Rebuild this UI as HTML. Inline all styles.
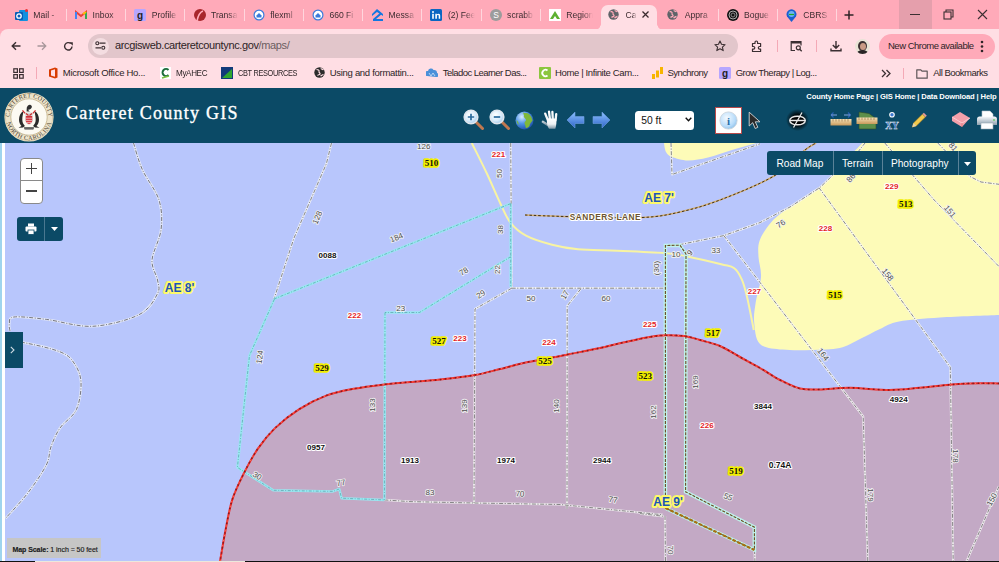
<!DOCTYPE html>
<html><head><meta charset="utf-8">
<style>
*{margin:0;padding:0;box-sizing:border-box}
html,body{width:999px;height:562px;overflow:hidden;background:#b8c6fc;font-family:"Liberation Sans",sans-serif}
.a{position:absolute}
#tabs{position:absolute;left:0;top:0;width:999px;height:40px;background:#ffaab9}
#tool{position:absolute;left:0;top:29px;width:999px;height:59px;background:#ffdee4;border-top-left-radius:8px}
.tt{position:absolute;top:9px;font-size:8.6px;line-height:12px;color:#3d2c30;white-space:nowrap;overflow:hidden;-webkit-mask-image:linear-gradient(90deg,#000 62%,transparent 96%)}
.sep{position:absolute;top:9px;width:1px;height:12px;background:#ffd6dd}
.atab{position:absolute;top:4.5px;width:56px;height:25px;background:#ffdee4;border-radius:7px 7px 0 0}
.atab::before,.atab::after{content:"";position:absolute;bottom:0;width:6px;height:6px}
.atab::before{left:-6px;background:radial-gradient(circle at 0 0,transparent 5.5px,#ffdee4 6px)}
.atab::after{right:-6px;background:radial-gradient(circle at 100% 0,transparent 5.5px,#ffdee4 6px)}
.bk{position:absolute;top:68px;font-size:9.5px;line-height:10px;letter-spacing:-0.4px;color:#2c2426;white-space:nowrap}
#hdr{position:absolute;left:0;top:88px;width:999px;height:55px;background:#0b4a66}
#map{position:absolute;left:0;top:143px;width:999px;height:419px;overflow:hidden;background:#b8c6fc}
.lb{position:absolute;white-space:nowrap;line-height:1}
.pid{font-size:8px;color:#111;text-shadow:0 0 1px #fff,0 0 1px #fff,0 0 2px #fff,0 0 2px #fff}
.b{font-weight:bold;font-size:8.5px}
.rd{font-size:8px;color:#e0262a;text-shadow:0 0 1px #fff,0 0 1px #fff,0 0 2px #fff,0 0 2px #fff}
.yl{font-family:"Liberation Serif",serif;font-weight:bold;font-size:9px;color:#111;background:#f4f000;border-radius:3px;padding:0 1px;box-shadow:0 0 1px 1px #f4f000}
.dm{font-size:8px;color:#5a5a5a;text-shadow:0 0 1px #f4f4f4,0 0 1px #f4f4f4,0 0 2px #eee}
.ae{font-size:12px;font-weight:bold;color:#1b4a94;text-shadow:0 0 1px #fffa80,0 0 1px #fffa80,0 0 2px #fffa80,0 0 2px #fffa80}
.sl{font-size:8.5px;font-weight:bold;color:#6b5430;letter-spacing:0.4px;text-shadow:0 0 1px #fff,0 0 1px #fff,0 0 2px #fff}
</style></head><body>
<div id="tabs"></div>
<div id="tool"></div>
<div class="a" style="left:14.8px;top:9px;line-height:0"><svg width="13" height="13" viewBox="0 0 13 13"><rect x="4" y="1" width="9" height="11" rx="1" fill="#1490df"/><rect x="0" y="3" width="8" height="8" rx="1" fill="#0a5eb5"/><circle cx="4" cy="7" r="2.2" fill="none" stroke="#fff" stroke-width="1.3"/><circle cx="11.5" cy="1.5" r="1.5" fill="#e33"/></svg></div>
<div class="tt" style="left:33.3px;width:28px">Mail -</div>
<div class="sep" style="left:66px"></div>
<div class="a" style="left:75.0px;top:10px;line-height:0"><svg width="12" height="10" viewBox="0 0 12 10"><path d="M1 9V2l5 4 5-4v7" fill="none" stroke="#ea4335" stroke-width="2"/><path d="M1 9V2" stroke="#4285f4" stroke-width="2"/><path d="M11 9V2" stroke="#34a853" stroke-width="2"/><path d="M8 4l3-2" stroke="#fbbc04" stroke-width="2"/></svg></div>
<div class="tt" style="left:92.5px;width:28px">Inbox</div>
<div class="sep" style="left:125px"></div>
<div class="a" style="left:134.2px;top:9px;line-height:0"><svg width="12" height="12" viewBox="0 0 12 12"><rect width="12" height="12" rx="1.5" fill="#b6a6ff"/><text x="6" y="9.5" font-size="10" font-weight="bold" text-anchor="middle" fill="#222" font-family="Liberation Sans">g</text></svg></div>
<div class="tt" style="left:151.7px;width:28px">Profile</div>
<div class="sep" style="left:184px"></div>
<div class="a" style="left:193.5px;top:9px;line-height:0"><svg width="12" height="12" viewBox="0 0 12 12"><circle cx="6" cy="6" r="6" fill="#a8262b"/><path d="M3 12C4 7 6 3 9 2" stroke="#ffaab9" stroke-width="1.5" fill="none"/></svg></div>
<div class="tt" style="left:211.0px;width:28px">Transa</div>
<div class="sep" style="left:244px"></div>
<div class="a" style="left:252.7px;top:9px;line-height:0"><svg width="12" height="13" viewBox="0 0 12 13"><circle cx="6" cy="6" r="5.5" fill="#3b7bdb"/><circle cx="6" cy="6" r="4.3" fill="#fff"/><path d="M3.5 6.5L6 4l2.5 2.5V8.5h-5z" fill="#3b7bdb"/></svg></div>
<div class="tt" style="left:270.2px;width:28px">flexml</div>
<div class="sep" style="left:303px"></div>
<div class="a" style="left:311.9px;top:9px;line-height:0"><svg width="12" height="13" viewBox="0 0 12 13"><circle cx="6" cy="6" r="5.5" fill="#3b7bdb"/><circle cx="6" cy="6" r="4.3" fill="#fff"/><path d="M3.5 6.5L6 4l2.5 2.5V8.5h-5z" fill="#3b7bdb"/></svg></div>
<div class="tt" style="left:329.4px;width:28px">660 Fi</div>
<div class="sep" style="left:362px"></div>
<div class="a" style="left:371.1px;top:9px;line-height:0"><svg width="12" height="12" viewBox="0 0 12 12"><path d="M6 0L12 5v2L6 3 1 7V5z" fill="#1277e1"/><path d="M2 12h10v-2H5l6-5-2-1-7 6z" fill="#1277e1"/></svg></div>
<div class="tt" style="left:388.6px;width:28px">Messa</div>
<div class="sep" style="left:421px"></div>
<div class="a" style="left:430.4px;top:9px;line-height:0"><svg width="12" height="12" viewBox="0 0 12 12"><rect width="12" height="12" rx="1.5" fill="#0a66c2"/><rect x="2.2" y="4.8" width="1.6" height="5" fill="#fff"/><circle cx="3" cy="3" r="1" fill="#fff"/><path d="M5.3 9.8V4.8h1.5v.8c.4-.6 1-.9 1.7-.9 1.2 0 1.7.8 1.7 2.1v3H8.7V7.2c0-.7-.2-1.1-.8-1.1s-1 .4-1 1.1v2.6z" fill="#fff"/></svg></div>
<div class="tt" style="left:447.9px;width:28px">(2) Fee</div>
<div class="sep" style="left:481px"></div>
<div class="a" style="left:489.6px;top:9px;line-height:0"><svg width="12" height="12" viewBox="0 0 12 12"><circle cx="6" cy="6" r="6" fill="#9c9c9c"/><text x="6" y="9" font-size="8.5" text-anchor="middle" fill="#fff" font-family="Liberation Sans">S</text></svg></div>
<div class="tt" style="left:507.1px;width:28px">scrabb</div>
<div class="sep" style="left:540px"></div>
<div class="a" style="left:548.8px;top:9px;line-height:0"><svg width="12" height="12" viewBox="0 0 12 12"><rect width="12" height="12" fill="#fff"/><path d="M1 10L6 2l5 8z" fill="#5cb030"/><path d="M4 10l2-3 2 3z" fill="#fff"/></svg></div>
<div class="tt" style="left:566.3px;width:28px">Region</div>
<div class="atab" style="left:601.1px"></div>
<div class="a" style="left:608.1px;top:9px;line-height:0"><svg width="11" height="11" viewBox="0 0 11 11"><circle cx="5.5" cy="5.5" r="5.2" fill="#5f6368"/><path d="M2.5 2.5c1.5 0 3 .5 2.5 2-.5 1 1.5 1.5 1 2.5-.5 1-2 .5-2.5 1.5M7 1.2c0 1 1.5 1 2.5 1.5M6.5 9c1-.5 2-1.5 3-1.5" stroke="#ffaab9" stroke-width="1.3" fill="none"/></svg></div>
<div class="tt" style="left:625.6px;width:11px">Ca</div>
<svg class="a" style="left:641.1px;top:10px" width="9" height="9" viewBox="0 0 9 9"><path d="M1.5 1.5l6 6M7.5 1.5l-6 6" stroke="#3a2a2e" stroke-width="1.3"/></svg>
<div class="a" style="left:667.3px;top:9px;line-height:0"><svg width="11" height="11" viewBox="0 0 11 11"><circle cx="5.5" cy="5.5" r="5.2" fill="#5f6368"/><path d="M2.5 2.5c1.5 0 3 .5 2.5 2-.5 1 1.5 1.5 1 2.5-.5 1-2 .5-2.5 1.5M7 1.2c0 1 1.5 1 2.5 1.5M6.5 9c1-.5 2-1.5 3-1.5" stroke="#ffaab9" stroke-width="1.3" fill="none"/></svg></div>
<div class="tt" style="left:684.8px;width:28px">Appra</div>
<div class="sep" style="left:718px"></div>
<div class="a" style="left:726.5px;top:9px;line-height:0"><svg width="12" height="12" viewBox="0 0 12 12"><circle cx="6" cy="6" r="6" fill="#111"/><circle cx="6" cy="6" r="4" fill="none" stroke="#aaa" stroke-width="1"/><circle cx="6" cy="6" r="2" fill="none" stroke="#888" stroke-width="1"/></svg></div>
<div class="tt" style="left:744.0px;width:28px">Bogue</div>
<div class="sep" style="left:777px"></div>
<div class="a" style="left:785.8px;top:9px;line-height:0"><svg width="11" height="13" viewBox="0 0 11 13"><path d="M5.5 13L1 7.5A5 5 0 1 1 10 7.5z" fill="#1a5fd0"/><circle cx="5.5" cy="5" r="3" fill="#6ab0f5"/><path d="M3 5.5h5" stroke="#2a2" stroke-width="1.2"/></svg></div>
<div class="tt" style="left:803.3px;width:28px">CBRS I</div>
<svg class="a" style="left:11px;top:41px" width="10" height="10" viewBox="0 0 10 10"><path d="M9.5 5H1.2M5 1.2L1.2 5 5 8.8" fill="none" stroke="#3b2f32" stroke-width="1.4"/></svg>
<svg class="a" style="left:37px;top:41px" width="10" height="10" viewBox="0 0 10 10"><path d="M0.5 5h8.3M5 1.2L8.8 5 5 8.8" fill="none" stroke="#a8979b" stroke-width="1.3"/></svg>
<svg class="a" style="left:63px;top:41px" width="11" height="11" viewBox="0 0 11 11"><path d="M9 5.5A3.7 3.7 0 1 1 7.8 2.6" fill="none" stroke="#3b2f32" stroke-width="1.4"/><path d="M6.3 1.2h3.5v3.5z" fill="#3b2f32"/></svg>
<div class="a" style="left:88px;top:34px;width:650px;height:24px;border-radius:12px;background:#e2c6cb"></div>
<div class="a" style="left:92px;top:38px;width:17px;height:17px;border-radius:50%;background:#f4dde1"></div>
<svg class="a" style="left:95px;top:41px" width="11" height="9" viewBox="0 0 11 9"><circle cx="2.3" cy="2.2" r="1.5" fill="none" stroke="#3b2f32" stroke-width="1.1"/><path d="M4.5 2.2h6M0.5 6.8h5.5" stroke="#3b2f32" stroke-width="1.2"/><circle cx="8.3" cy="6.8" r="1.5" fill="none" stroke="#3b2f32" stroke-width="1.1"/></svg>
<div class="a" style="left:115px;top:39px;font-size:11px;line-height:13px;letter-spacing:-0.37px;color:#2e2326;white-space:nowrap">arcgisweb.carteretcountync.gov<span style="color:#6c5d61">/maps/</span></div>
<svg class="a" style="left:714px;top:40px" width="12" height="12" viewBox="0 0 12 12"><path d="M6 1l1.5 3.3 3.6.4-2.7 2.4.8 3.5L6 8.8 2.8 10.6l.8-3.5L.9 4.7l3.6-.4z" fill="none" stroke="#3b2f32" stroke-width="1.1" stroke-linejoin="round"/></svg>
<svg class="a" style="left:751px;top:40px" width="12" height="12" viewBox="0 0 12 12"><path d="M1.5 3.5h2.5V2.3a1.3 1.3 0 0 1 2.6 0v1.2h3v3h-1a1.3 1.3 0 0 0 0 2.6h1v2.4h-8.1V9.1h1a1.3 1.3 0 0 0 0-2.6h-1z" fill="none" stroke="#3b2f32" stroke-width="1.2" stroke-linejoin="round"/></svg>
<div class="a" style="left:777px;top:40px;width:1px;height:12px;background:#f4a9b6"></div>
<svg class="a" style="left:790px;top:40px" width="13" height="12" viewBox="0 0 13 12"><path d="M5 10.5H1.2V1.5h9.8v4" fill="none" stroke="#3b2f32" stroke-width="1.2"/><path d="M1.2 1.5h9.8v2H1.2z" fill="#3b2f32"/><circle cx="8.3" cy="7.8" r="2" fill="none" stroke="#3b2f32" stroke-width="1.2"/><path d="M9.7 9.2l2 2" stroke="#3b2f32" stroke-width="1.3"/></svg>
<div class="a" style="left:816px;top:40px;width:1px;height:12px;background:#f4a9b6"></div>
<svg class="a" style="left:830px;top:40px" width="12" height="12" viewBox="0 0 12 12"><path d="M6 1v7M2.8 5l3.2 3.2L9.2 5M1 8.5v2.3h10V8.5" fill="none" stroke="#3b2f32" stroke-width="1.4"/></svg>
<div class="a" style="left:855px;top:39px;width:15px;height:15px;border-radius:50%;background:#e9e4d6;overflow:hidden"><div class="a" style="left:3px;top:2px;width:9px;height:10px;border-radius:50%;background:#3a3030"></div><div class="a" style="left:5px;top:4px;width:6px;height:7px;border-radius:50%;background:#c99a84"></div><div class="a" style="left:2px;top:11px;width:11px;height:6px;border-radius:50%;background:#2a2426"></div></div>
<div class="a" style="left:879px;top:33.5px;width:116px;height:25px;border-radius:13px;background:#ffaab9"></div>
<div class="a" style="left:888px;top:40px;font-size:9.5px;line-height:12px;letter-spacing:-0.5px;color:#2e2326;white-space:nowrap">New Chrome available</div>
<svg class="a" style="left:980px;top:40px" width="4" height="13" viewBox="0 0 4 13"><circle cx="2" cy="2" r="1.3" fill="#2e2326"/><circle cx="2" cy="6.5" r="1.3" fill="#2e2326"/><circle cx="2" cy="11" r="1.3" fill="#2e2326"/></svg>
<!-- window controls -->
<div class="a" style="left:899px;top:0;width:33px;height:29px;background:#e59fac"></div>
<div class="a" style="left:910px;top:14px;width:10px;height:1px;background:#3b2f32"></div>
<svg class="a" style="left:943px;top:9px" width="11" height="11" viewBox="0 0 11 11"><rect x="1" y="3" width="7" height="7" fill="none" stroke="#3b2f32" stroke-width="1.1"/><path d="M3 3V1h7v7H8" fill="none" stroke="#3b2f32" stroke-width="1.1"/></svg>
<svg class="a" style="left:977px;top:9px" width="11" height="11" viewBox="0 0 11 11"><path d="M1 1l9 9M10 1l-9 9" stroke="#3b2f32" stroke-width="1.1"/></svg>
<div class="a" style="left:836px;top:9px;width:1px;height:12px;background:#ffd6dd"></div>
<svg class="a" style="left:844px;top:10px" width="10" height="10" viewBox="0 0 10 10"><path d="M5 0.5v9M0.5 5h9" stroke="#2e2326" stroke-width="1.5"/></svg>
<!-- bookmarks -->
<svg class="a" style="left:13px;top:68px" width="11" height="11" viewBox="0 0 11 11"><g fill="none" stroke="#3b2f32" stroke-width="1.2"><rect x="0.8" y="0.8" width="3.6" height="3.6"/><rect x="6.6" y="0.8" width="3.6" height="3.6"/><rect x="0.8" y="6.6" width="3.6" height="3.6"/><rect x="6.6" y="6.6" width="3.6" height="3.6"/></g></svg>
<div class="a" style="left:35.5px;top:67px;width:1px;height:12px;background:#f4a9b6"></div>
<svg class="a" style="left:48px;top:67px" width="10" height="12" viewBox="0 0 10 12"><path d="M1 2.5L7 0.5l2.5 1v9L7 11.5 1 9.5z" fill="#d83b01"/><path d="M3 3.5l4-1.2v7.4L3 8.5z" fill="#ffdee4"/></svg>
<div class="bk" style="left:62.8px;letter-spacing:-0.28px">Microsoft Office Ho...</div>
<svg class="a" style="left:160px;top:67px" width="11" height="12" viewBox="0 0 11 12"><rect width="11" height="12" fill="#fff"/><path d="M8.5 3A3.5 3.5 0 1 0 8.5 8" fill="none" stroke="#1d6e3c" stroke-width="2"/><path d="M2 11l7-2" stroke="#7ac142" stroke-width="1.5"/></svg>
<div class="bk" style="left:175.8px;transform:scaleX(0.85);transform-origin:0 0">MyAHEC</div>
<svg class="a" style="left:221px;top:67px" width="12" height="12" viewBox="0 0 12 12"><rect width="12" height="12" fill="#123a7a"/><path d="M1 11L11 2v9z" fill="#2fa52f"/></svg>
<div class="bk" style="left:237.8px;transform:scaleX(0.774);transform-origin:0 0">CBT RESOURCES</div>
<svg class="a" style="left:314px;top:67px" width="11" height="11" viewBox="0 0 11 11"><circle cx="5.5" cy="5.5" r="5.2" fill="#2b2b2b"/><path d="M2.5 2.5c1.5 0 3 .5 2.5 2-.5 1 1.5 1.5 1 2.5-.5 1-2 .5-2.5 1.5M7 1.2c0 1 1.5 1 2.5 1.5M6.5 9c1-.5 2-1.5 3-1.5" stroke="#ffdee4" stroke-width="1.2" fill="none"/></svg>
<div class="bk" style="left:329.7px;letter-spacing:-0.29px">Using and formattin...</div>
<svg class="a" style="left:426px;top:68px" width="12" height="10" viewBox="0 0 12 10"><path d="M1 8a2.5 2.5 0 0 1 1-5 3 3 0 0 1 5.5-1 2.8 2.8 0 0 1 3.5 3A2 2 0 0 1 10 9z" fill="#4a90d9"/><path d="M3 5l2 3 2-3 2 3" stroke="#cfe3f7" stroke-width="0.8" fill="none"/></svg>
<div class="bk" style="left:442.7px;letter-spacing:-0.54px">Teladoc Learner Das...</div>
<svg class="a" style="left:538.5px;top:67px" width="12" height="12" viewBox="0 0 12 12"><rect width="12" height="12" rx="1" fill="#8cc63f"/><path d="M8.5 3.5A3.2 3.2 0 1 0 8.5 8.5" fill="none" stroke="#fff" stroke-width="1.8"/></svg>
<div class="bk" style="left:555px;letter-spacing:-0.37px">Home | Infinite Cam...</div>
<svg class="a" style="left:652px;top:67px" width="11" height="12" viewBox="0 0 11 12"><rect x="0" y="7" width="3" height="5" fill="#f7b500"/><rect x="4" y="3.5" width="3" height="7" fill="#f7b500"/><rect x="8" y="0" width="3" height="7" fill="#f7b500"/></svg>
<div class="bk" style="left:667.4px;letter-spacing:-0.54px">Synchrony</div>
<svg class="a" style="left:719.4px;top:67px" width="12" height="12" viewBox="0 0 12 12"><rect width="12" height="12" rx="1.5" fill="#b6a6ff"/><text x="6" y="9.5" font-size="10" font-weight="bold" text-anchor="middle" fill="#222" font-family="Liberation Sans">g</text></svg>
<div class="bk" style="left:735.7px;letter-spacing:-0.51px">Grow Therapy | Log...</div>
<svg class="a" style="left:881px;top:69px" width="10" height="9" viewBox="0 0 10 9"><path d="M1 1l3.5 3.5L1 8M5.5 1L9 4.5 5.5 8" fill="none" stroke="#3b2f32" stroke-width="1.3"/></svg>
<div class="a" style="left:903px;top:67.5px;width:1px;height:11px;background:#f4a9b6"></div>
<svg class="a" style="left:915.5px;top:68.5px" width="12" height="10" viewBox="0 0 12 10"><path d="M0.8 0.8h4l1.2 1.4h5.2v7H0.8z" fill="none" stroke="#5f5558" stroke-width="1.2" stroke-linejoin="round"/></svg>
<div class="bk" style="left:933.2px;letter-spacing:-0.49px">All Bookmarks</div>

<div id="hdr"></div>
<svg class="a" style="left:4px;top:92px" width="50" height="50" viewBox="0 0 50 50">
<defs><path id="sealc" d="M8.1 34.75A19.5 19.5 0 1 1 41.9 34.75"/><path id="sealb" d="M2.8 19.05A23 23 0 1 0 47.2 19.05"/></defs>
<circle cx="25" cy="25" r="24.6" fill="#ede4cb"/>
<circle cx="25" cy="25" r="23.6" fill="none" stroke="#cbbb94" stroke-width="0.6"/>
<circle cx="25" cy="25" r="18.2" fill="#fcfaf2" stroke="#b9a77e" stroke-width="0.7"/>
<text font-size="6.2" font-family="Liberation Serif" fill="#4a4030" letter-spacing="0.15"><textPath href="#sealc" startOffset="50%" text-anchor="middle">CARTERET COUNTY</textPath></text>
<text font-size="6.2" font-family="Liberation Serif" fill="#4a4030" letter-spacing="0.45"><textPath href="#sealb" startOffset="50%" text-anchor="middle">NORTH CAROLINA</textPath></text>
<path d="M19.5 19c-3 1.5-4.5 5-4.5 8.5 0 3 1 5 2.5 6.5l-3 1.8 4.6-.3 1.8-1.6c-1.6-1.6-2.6-3.6-2.6-6.4 0-3 .8-5.5 1.2-8.5z" fill="#2a2a2a"/>
<path d="M30.5 19c3 1.5 4.5 5 4.5 8.5 0 3-1 5-2.5 6.5l3 1.8-4.6-.3-1.8-1.6c1.6-1.6 2.6-3.6 2.6-6.4 0-3-.8-5.5-1.2-8.5z" fill="#2a2a2a"/>
<path d="M21.3 20.5h7.4v8c0 2.4-1.7 3.6-3.7 4.3-2-.7-3.7-1.9-3.7-4.3z" fill="#d9d9d9"/>
<path d="M21.8 24h6.4v4.5c0 2-1.4 3-3.2 3.6-1.8-.6-3.2-1.6-3.2-3.6z" fill="#d4303a"/>
<path d="M22 26.2h6M22 28.4h6M22.5 30.4h5" stroke="#f7e2e2" stroke-width="0.7"/>
<path d="M22.8 15.5c.6-2 2.3-3.2 3.8-2.6 1.2.5 1.8 1.8.8 3.2-.8 1.2-2.2 1.8-3.2 1.5.2 1 1 1.6 1.8 2h-3.4c.2-1.4-.1-2.8.2-4.1z" fill="#303030"/>
<path d="M18.5 18.3l2.6 3M31.5 18.3l-2.6 3M22 21.5l2.5 2M28 21.5l-2.5 2" stroke="#cc2a2a" stroke-width="1.2"/>
<path d="M20 35.2h10l-.6 2.2h-8.8z" fill="#3a3a3a"/><path d="M21 36.3h8" stroke="#bbb" stroke-width="0.4"/>
</svg>
<div class="a" style="left:66px;top:102px;font-family:'Liberation Serif',serif;font-size:18px;line-height:22px;letter-spacing:1.25px;color:#fff;-webkit-text-stroke:0.35px #fff;white-space:nowrap">Carteret County GIS</div>
<div class="a" style="left:806.3px;top:92px;font-size:7.6px;line-height:9px;font-weight:bold;letter-spacing:-0.12px;color:#fff;white-space:nowrap">County Home Page | GIS Home | Data Download | Help</div>
<!-- zoom in -->
<svg class="a" style="left:463px;top:109px" width="21" height="21" viewBox="0 0 21 21"><defs><radialGradient id="lens" cx="40%" cy="35%" r="70%"><stop offset="0" stop-color="#ffffff"/><stop offset="0.6" stop-color="#d8ecfc"/><stop offset="1" stop-color="#9cc6ea"/></radialGradient></defs><path d="M13 13l6.5 6.5" stroke="#c07850" stroke-width="3" stroke-linecap="round"/><circle cx="8" cy="8" r="6.8" fill="url(#lens)" stroke="#dfe6ee" stroke-width="1.6"/><path d="M8 4.8v6.4M4.8 8h6.4" stroke="#2a6a9c" stroke-width="1.7"/></svg>
<svg class="a" style="left:489px;top:109px" width="21" height="21" viewBox="0 0 21 21"><path d="M13 13l6.5 6.5" stroke="#c07850" stroke-width="3" stroke-linecap="round"/><circle cx="8" cy="8" r="6.8" fill="url(#lens)" stroke="#dfe6ee" stroke-width="1.6"/><path d="M4.8 8h6.4" stroke="#2a6a9c" stroke-width="1.7"/></svg>
<svg class="a" style="left:515px;top:111px" width="19" height="19" viewBox="0 0 19 19"><defs><radialGradient id="gl" cx="35%" cy="30%" r="75%"><stop offset="0" stop-color="#d8ecff"/><stop offset="0.5" stop-color="#4f93e8"/><stop offset="1" stop-color="#1d4fa8"/></radialGradient></defs><circle cx="9.5" cy="9.5" r="9" fill="url(#gl)"/><path d="M8 1.5c2 1 4 0 6 1.5 2 2 3 4 3.5 6.5-1 2-3 3-3 5.5-1 1.5-3 2.5-4 1.5.5-2-1-3-1-4.5s2-2 1.5-3.5C10 7 8 6 9 4.5z M1.5 9c1.5 1 2.5 3 2 5-1-1-2-3-2-5z" fill="#7fb83a"/></svg>
<svg class="a" style="left:538px;top:106px" width="24" height="26" viewBox="538 106 24 26"><defs><linearGradient id="hg" x1="0" y1="0" x2="0" y2="1"><stop offset="0" stop-color="#ffffff"/><stop offset="0.55" stop-color="#eef2f5"/><stop offset="1" stop-color="#7f97a6"/></linearGradient></defs><g stroke="url(#hg)" stroke-linecap="round" fill="none" stroke-width="2.3"><path d="M545.2 113.6L548 120.5M549 111.6L550 119.5M552.4 112L552.8 119.5M556.2 114.2L555.6 120.5M542.8 121.8L547.8 125"/></g><path d="M547 118.5h9.3c.3 3 .2 6.5-1 10.2h-6.3c-1.5-2-2.5-5-2-10.2z" fill="url(#hg)"/></svg>
<svg class="a" style="left:566px;top:111px" width="19" height="18" viewBox="0 0 19 18"><defs><linearGradient id="ag" x1="0" y1="0" x2="0" y2="1"><stop offset="0" stop-color="#8cc0ff"/><stop offset="1" stop-color="#2e64c8"/></linearGradient></defs><path d="M1 9L9 1v4.5h9v7H9V17z" fill="url(#ag)" stroke="#6f9ee0" stroke-width="0.6"/></svg>
<svg class="a" style="left:592px;top:111px" width="19" height="18" viewBox="0 0 19 18"><path d="M18 9L10 1v4.5H1v7h9V17z" fill="url(#ag)" stroke="#6f9ee0" stroke-width="0.6"/></svg>
<div class="a" style="left:635px;top:110.5px;width:59px;height:19.5px;border-radius:3.5px;background:#fff"></div>
<div class="a" style="left:641.3px;top:114.5px;font-size:10.3px;line-height:12px;color:#111;white-space:nowrap">50 ft</div>
<svg class="a" style="left:684.5px;top:117px" width="7" height="5" viewBox="0 0 7 5"><path d="M0.7 0.8L3.5 3.8 6.3 0.8" fill="none" stroke="#111" stroke-width="1.4"/></svg>
<!-- info -->
<div class="a" style="left:714.8px;top:107px;width:27px;height:27px;background:#fff;border:1px solid #b84a4a"></div>
<svg class="a" style="left:718.5px;top:110.5px" width="19" height="19" viewBox="0 0 19 19"><defs><radialGradient id="ig" cx="40%" cy="35%" r="70%"><stop offset="0" stop-color="#f4faff"/><stop offset="0.7" stop-color="#b8dcfa"/><stop offset="1" stop-color="#8cbfe8"/></radialGradient></defs><circle cx="9.5" cy="9.5" r="8.6" fill="url(#ig)" stroke="#c9d4dc" stroke-width="0.9"/><text x="9.5" y="14" font-size="11" font-family="Liberation Serif" font-weight="bold" text-anchor="middle" fill="#2a6ea8">i</text></svg>
<svg class="a" style="left:748px;top:110.5px" width="15" height="19" viewBox="0 0 15 19"><path d="M1.2 1.2V15l3.5-3.3 2.5 5.8 2.6-1.2-2.5-5.5H12z" fill="#2b2b2b" stroke="#d8d8d8" stroke-width="0.9" stroke-linejoin="round"/></svg>
<svg class="a" style="left:786px;top:109px" width="23" height="22" viewBox="0 0 23 22"><defs><radialGradient id="mg" cx="50%" cy="50%" r="50%"><stop offset="0.5" stop-color="#000" stop-opacity="0.85"/><stop offset="1" stop-color="#000" stop-opacity="0"/></radialGradient></defs><rect width="23" height="22" fill="url(#mg)"/><ellipse cx="11.5" cy="11.5" rx="7.8" ry="4.3" fill="#000" stroke="#e8e8e8" stroke-width="1.4"/><path d="M16 3.5l-8.5 15M3.7 11.5h15.6" stroke="#e8e8e8" stroke-width="1.3"/></svg>
<!-- ruler arrows -->
<svg class="a" style="left:830px;top:111px" width="22" height="15" viewBox="0 0 22 15"><defs><linearGradient id="rg" x1="0" y1="0" x2="0" y2="1"><stop offset="0" stop-color="#f6e2b8"/><stop offset="1" stop-color="#c99a5b"/></linearGradient></defs><path d="M1 4h6M1 4l2.5-2.5M1 4l2.5 2.5M14 4h6.5M20.5 4L18 1.5M20.5 4L18 6.5" stroke="#2a62b8" stroke-width="1.2" fill="none"/><path d="M1 4h6M14 4h6.5" stroke="#fff" stroke-width="0.4"/><rect x="0.5" y="8" width="21" height="6.5" fill="url(#rg)"/><path d="M3 8v2.5M6 8v2.5M9 8v2.5M12 8v2.5M15 8v2.5M18 8v2.5" stroke="#8a6a3a" stroke-width="0.6"/></svg>
<svg class="a" style="left:855.5px;top:110.5px" width="22" height="19" viewBox="0 0 22 19"><path d="M3 1l10 1.5 7 5v10.5H3z" fill="#5d8f4a" stroke="#2f4a28" stroke-width="0.6"/><rect x="0.5" y="6.5" width="21" height="6.5" fill="url(#rg)"/><path d="M3 6.5v2.5M6 6.5v2.5M9 6.5v2.5M12 6.5v2.5M15 6.5v2.5M18 6.5v2.5" stroke="#8a6a3a" stroke-width="0.6"/></svg>
<svg class="a" style="left:883px;top:110.5px" width="19" height="19" viewBox="0 0 19 19"><circle cx="9" cy="3.8" r="2.8" fill="#fff"/><circle cx="9" cy="3.8" r="1.7" fill="#3a78d0"/><text x="9" y="18.3" font-size="9.5" font-weight="bold" text-anchor="middle" font-family="Liberation Serif" fill="#2a62b8" stroke="#fff" stroke-width="0.3">XY</text></svg>
<svg class="a" style="left:910px;top:112px" width="17" height="17" viewBox="0 0 17 17"><path d="M2.2 15.2l1.2-4.2L12.5 2l3 3-9.1 9z" fill="#f2c94c" stroke="#7a6020" stroke-width="0.5"/><path d="M12.5 2l1.3-1.3 3 3L15.5 5z" fill="#e79a9a"/><path d="M2.2 15.2l1.2-4.2 3 3z" fill="#e8d3a8"/></svg>
<svg class="a" style="left:950.5px;top:111px" width="20" height="17" viewBox="0 0 20 17"><path d="M1 6l8-5 10 6-8 9L1 10z" fill="#f3a0aa"/><path d="M1 6l10 6 8-5" fill="none" stroke="#fcd6da" stroke-width="0.8"/><path d="M11 12v4" stroke="#c66" stroke-width="0.6"/></svg>
<svg class="a" style="left:975.5px;top:110px" width="22" height="20" viewBox="0 0 22 20"><defs><linearGradient id="pg" x1="0" y1="0" x2="0" y2="1"><stop offset="0" stop-color="#f8fafc"/><stop offset="1" stop-color="#8ea0ae"/></linearGradient></defs><path d="M6 1h8l3 3v5H6z" fill="#fff" stroke="#b8c4cc" stroke-width="0.6"/><path d="M1 9c0-1.5 1-2.5 2.5-2.5h15C20 6.5 21 7.5 21 9v6H1z" fill="url(#pg)"/><rect x="5" y="13" width="12" height="6" fill="#fff" stroke="#9aa8b2" stroke-width="0.6"/><circle cx="18" cy="10" r="0.9" fill="#6c6"/></svg>

<div id="map">
<svg class="a" style="left:0;top:-143px" width="999" height="562" viewBox="0 0 999 562">
<path d="M664.0 143.0 C664.3 144.5 664.7 149.7 666.0 152.0 C667.3 154.3 668.3 155.6 672.0 157.0 C675.7 158.4 682.0 160.4 688.0 160.5 C694.0 160.6 700.7 159.2 708.0 157.5 C715.3 155.8 723.8 152.4 732.0 150.0 C740.2 147.6 752.8 144.2 757.0 143.0 Z" fill="#fdfbb8"/>
<path d="M862.5 143.0 C859.8 145.8 851.0 154.7 846.0 160.0 C841.0 165.3 837.2 170.2 832.5 175.0 C827.8 179.8 823.4 184.2 818.0 188.5 C812.6 192.8 806.3 196.8 800.0 201.0 C793.7 205.2 785.2 209.9 780.0 214.0 C774.8 218.1 771.9 221.0 768.5 225.6 C765.1 230.2 761.1 236.1 759.4 241.3 C757.7 246.5 758.2 251.1 758.5 257.0 C758.8 262.9 761.5 269.4 761.0 277.0 C760.5 284.6 756.8 295.0 755.7 302.6 C754.6 310.2 753.5 315.6 754.2 322.5 C754.9 329.4 755.2 339.4 760.0 343.9 C764.8 348.4 774.0 348.6 782.7 349.6 C791.4 350.6 802.5 350.3 812.0 350.0 C821.5 349.7 831.7 349.8 839.7 348.0 C847.7 346.2 853.3 342.2 860.0 339.0 C866.7 335.8 873.5 331.9 880.0 329.0 C886.5 326.1 889.0 323.4 899.0 321.5 C909.0 319.6 923.3 318.6 940.0 317.5 C956.7 316.4 989.2 315.4 999.0 315.0 L999 143 Z" fill="#fdfbb8"/>
<path d="M219.5 562.0 C219.6 561.6 219.3 564.9 220.3 559.7 C221.3 554.5 223.4 540.7 225.4 530.7 C227.4 520.7 229.1 509.6 232.2 499.9 C235.3 490.2 239.9 481.2 244.2 472.6 C248.5 464.1 252.8 456.0 257.9 448.6 C263.0 441.2 268.2 434.7 275.0 428.1 C281.8 421.6 290.4 414.7 298.9 409.3 C307.4 403.9 317.1 399.0 326.2 395.6 C335.3 392.2 343.9 390.7 353.6 388.8 C363.3 386.9 375.0 385.5 384.4 384.4 C393.8 383.3 400.7 382.8 410.0 382.0 C419.3 381.2 429.2 380.8 440.0 379.6 C450.8 378.4 465.0 376.8 475.0 375.0 C485.0 373.2 491.2 371.2 500.0 369.0 C508.8 366.8 519.3 363.9 528.0 362.0 C536.7 360.1 545.0 358.9 552.0 357.6 C559.0 356.3 562.0 355.6 570.0 354.0 C578.0 352.4 590.0 350.2 600.0 348.0 C610.0 345.8 620.0 343.1 630.0 341.0 C640.0 338.9 651.0 336.4 660.0 335.6 C669.0 334.8 677.3 335.3 684.0 336.0 C690.7 336.7 694.0 338.3 700.0 340.0 C706.0 341.7 713.3 343.2 720.0 346.0 C726.7 348.8 733.3 353.3 740.0 357.0 C746.7 360.7 753.3 364.2 760.0 368.0 C766.7 371.8 773.3 376.6 780.0 380.0 C786.7 383.4 793.3 386.9 800.0 388.5 C806.7 390.1 811.7 389.5 820.0 389.4 C828.3 389.3 838.2 387.7 849.8 387.8 C861.4 387.9 878.0 390.0 889.6 390.0 C901.2 390.0 909.5 388.7 919.5 387.8 C929.5 386.9 941.1 385.5 949.4 384.8 C957.7 384.1 961.0 383.6 969.3 383.4 C977.6 383.2 994.0 383.4 999.0 383.4 L999 562 Z" fill="#c3a9c5"/>
<path d="M471.8 143.0 C474.3 148.1 482.2 163.6 487.0 173.8 C491.8 184.0 496.7 195.9 500.6 204.0 C504.5 212.1 506.2 217.3 510.4 222.6 C514.6 227.9 519.1 231.9 526.0 235.6 C532.9 239.3 543.3 242.4 552.0 244.7 C560.7 247.0 567.2 248.2 578.0 249.2 C588.8 250.2 602.7 250.1 617.0 250.7 C631.3 251.3 652.3 252.1 664.0 253.0 C675.7 253.9 677.9 254.5 687.4 256.4 C696.9 258.3 713.4 262.2 721.2 264.2 C729.0 266.2 730.8 265.6 734.3 268.2 C737.8 270.8 739.8 274.9 742.0 279.9 C744.2 284.9 745.3 289.6 747.3 298.0 C749.3 306.4 752.7 324.7 753.8 330.0" fill="none" stroke="#f8f4a2" stroke-width="2"/>
<path d="M331.5 143.0 L326.4 163.7 L294.0 238.0 L274.0 299.0" fill="none" stroke="#f8f8f6" stroke-opacity="0.8" stroke-width="2.2" stroke-linejoin="round"/>
<path d="M510.7 143.0 L511.7 288.2" fill="none" stroke="#f8f8f6" stroke-opacity="0.8" stroke-width="2.2" stroke-linejoin="round"/>
<path d="M511.7 288.2 L665.3 288.2" fill="none" stroke="#f8f8f6" stroke-opacity="0.8" stroke-width="2.2" stroke-linejoin="round"/>
<path d="M511.7 288.2 L475.0 309.0 L474.0 503.0" fill="none" stroke="#f8f8f6" stroke-opacity="0.8" stroke-width="2.2" stroke-linejoin="round"/>
<path d="M580.7 289.0 L567.2 305.9 L567.0 509.0" fill="none" stroke="#f8f8f6" stroke-opacity="0.8" stroke-width="2.2" stroke-linejoin="round"/>
<path d="M384.4 499.9 L410.0 501.6 L474.0 503.0 L560.0 504.5 L663.0 514.8" fill="none" stroke="#f8f8f6" stroke-opacity="0.8" stroke-width="2.2" stroke-linejoin="round"/>
<path d="M640.0 513.6 L663.6 516.3" fill="none" stroke="#f8f8f6" stroke-opacity="0.8" stroke-width="2.2" stroke-linejoin="round"/>
<path d="M665.0 516.0 L665.5 562.0" fill="none" stroke="#f8f8f6" stroke-opacity="0.8" stroke-width="2.2" stroke-linejoin="round"/>
<path d="M671.0 143.0 L672.0 174.5 L760.0 143.8" fill="none" stroke="#f8f8f6" stroke-opacity="0.8" stroke-width="2.2" stroke-linejoin="round"/>
<path d="M679.6 244.7 L723.8 235.6 L760.0 222.6 L790.0 207.0 L820.0 187.5 L833.0 175.0 L857.5 152.5 L865.0 143.0" fill="none" stroke="#f8f8f6" stroke-opacity="0.8" stroke-width="2.2" stroke-linejoin="round"/>
<path d="M723.8 235.6 L760.0 282.5 L863.2 416.5 L867.8 562.0" fill="none" stroke="#f8f8f6" stroke-opacity="0.8" stroke-width="2.2" stroke-linejoin="round"/>
<path d="M819.0 187.7 L950.3 367.2 L953.2 562.0" fill="none" stroke="#f8f8f6" stroke-opacity="0.8" stroke-width="2.2" stroke-linejoin="round"/>
<path d="M884.8 143.0 L912.8 175.3 L934.2 200.0 L999.0 266.5" fill="none" stroke="#f8f8f6" stroke-opacity="0.8" stroke-width="2.2" stroke-linejoin="round"/>
<path d="M937.8 143.0 L970.0 176.5 L981.0 182.0 L999.0 184.3" fill="none" stroke="#f8f8f6" stroke-opacity="0.8" stroke-width="2.2" stroke-linejoin="round"/>
<path d="M999.0 486.3 L966.3 562.0" fill="none" stroke="#f8f8f6" stroke-opacity="0.8" stroke-width="2.2" stroke-linejoin="round"/>
<path d="M686.5 254.0 L690.0 250.0" fill="none" stroke="#f8f8f6" stroke-opacity="0.8" stroke-width="2.2" stroke-linejoin="round"/>
<path d="M754.5 550.0 L755.0 562.0" fill="none" stroke="#f8f8f6" stroke-opacity="0.8" stroke-width="2.2" stroke-linejoin="round"/>
<path d="M331.5 143.0 L326.4 163.7 L294.0 238.0 L274.0 299.0" fill="none" stroke="#6c6c6c" stroke-width="0.8" stroke-dasharray="4 1.5 1.2 1.5" stroke-linejoin="round"/>
<path d="M510.7 143.0 L511.7 288.2" fill="none" stroke="#6c6c6c" stroke-width="0.8" stroke-dasharray="4 1.5 1.2 1.5" stroke-linejoin="round"/>
<path d="M511.7 288.2 L665.3 288.2" fill="none" stroke="#6c6c6c" stroke-width="0.8" stroke-dasharray="4 1.5 1.2 1.5" stroke-linejoin="round"/>
<path d="M511.7 288.2 L475.0 309.0 L474.0 503.0" fill="none" stroke="#6c6c6c" stroke-width="0.8" stroke-dasharray="4 1.5 1.2 1.5" stroke-linejoin="round"/>
<path d="M580.7 289.0 L567.2 305.9 L567.0 509.0" fill="none" stroke="#6c6c6c" stroke-width="0.8" stroke-dasharray="4 1.5 1.2 1.5" stroke-linejoin="round"/>
<path d="M384.4 499.9 L410.0 501.6 L474.0 503.0 L560.0 504.5 L663.0 514.8" fill="none" stroke="#6c6c6c" stroke-width="0.8" stroke-dasharray="4 1.5 1.2 1.5" stroke-linejoin="round"/>
<path d="M640.0 513.6 L663.6 516.3" fill="none" stroke="#6c6c6c" stroke-width="0.8" stroke-dasharray="4 1.5 1.2 1.5" stroke-linejoin="round"/>
<path d="M665.0 516.0 L665.5 562.0" fill="none" stroke="#6c6c6c" stroke-width="0.8" stroke-dasharray="4 1.5 1.2 1.5" stroke-linejoin="round"/>
<path d="M671.0 143.0 L672.0 174.5 L760.0 143.8" fill="none" stroke="#6c6c6c" stroke-width="0.8" stroke-dasharray="4 1.5 1.2 1.5" stroke-linejoin="round"/>
<path d="M679.6 244.7 L723.8 235.6 L760.0 222.6 L790.0 207.0 L820.0 187.5 L833.0 175.0 L857.5 152.5 L865.0 143.0" fill="none" stroke="#6c6c6c" stroke-width="0.8" stroke-dasharray="4 1.5 1.2 1.5" stroke-linejoin="round"/>
<path d="M723.8 235.6 L760.0 282.5 L863.2 416.5 L867.8 562.0" fill="none" stroke="#6c6c6c" stroke-width="0.8" stroke-dasharray="4 1.5 1.2 1.5" stroke-linejoin="round"/>
<path d="M819.0 187.7 L950.3 367.2 L953.2 562.0" fill="none" stroke="#6c6c6c" stroke-width="0.8" stroke-dasharray="4 1.5 1.2 1.5" stroke-linejoin="round"/>
<path d="M884.8 143.0 L912.8 175.3 L934.2 200.0 L999.0 266.5" fill="none" stroke="#6c6c6c" stroke-width="0.8" stroke-dasharray="4 1.5 1.2 1.5" stroke-linejoin="round"/>
<path d="M937.8 143.0 L970.0 176.5 L981.0 182.0 L999.0 184.3" fill="none" stroke="#6c6c6c" stroke-width="0.8" stroke-dasharray="4 1.5 1.2 1.5" stroke-linejoin="round"/>
<path d="M999.0 486.3 L966.3 562.0" fill="none" stroke="#6c6c6c" stroke-width="0.8" stroke-dasharray="4 1.5 1.2 1.5" stroke-linejoin="round"/>
<path d="M686.5 254.0 L690.0 250.0" fill="none" stroke="#6c6c6c" stroke-width="0.8" stroke-dasharray="4 1.5 1.2 1.5" stroke-linejoin="round"/>
<path d="M754.5 550.0 L755.0 562.0" fill="none" stroke="#6c6c6c" stroke-width="0.8" stroke-dasharray="4 1.5 1.2 1.5" stroke-linejoin="round"/>
<path d="M274.0 299.0 L510.7 203.6" fill="none" stroke="#9ae8f2" stroke-width="2.5" stroke-linejoin="round"/>
<path d="M510.7 203.6 L510.7 287.0" fill="none" stroke="#9ae8f2" stroke-width="2.5" stroke-linejoin="round"/>
<path d="M274.3 299.3 L249.5 355.5 L237.4 467.4 L273.2 490.3 L333.0 491.4 L339.2 489.0 L341.6 498.2 L384.4 499.9" fill="none" stroke="#9ae8f2" stroke-width="2.5" stroke-linejoin="round"/>
<path d="M385.0 312.5 L384.4 499.9" fill="none" stroke="#9ae8f2" stroke-width="2.5" stroke-linejoin="round"/>
<path d="M510.7 256.7 L419.4 312.5 L385.0 312.5" fill="none" stroke="#9ae8f2" stroke-width="2.5" stroke-linejoin="round"/>
<path d="M274.0 299.0 L510.7 203.6" fill="none" stroke="#3f7f88" stroke-opacity="0.7" stroke-width="0.7" stroke-dasharray="3 1.5 1 1.5" stroke-linejoin="round"/>
<path d="M510.7 203.6 L510.7 287.0" fill="none" stroke="#3f7f88" stroke-opacity="0.7" stroke-width="0.7" stroke-dasharray="3 1.5 1 1.5" stroke-linejoin="round"/>
<path d="M274.3 299.3 L249.5 355.5 L237.4 467.4 L273.2 490.3 L333.0 491.4 L339.2 489.0 L341.6 498.2 L384.4 499.9" fill="none" stroke="#3f7f88" stroke-opacity="0.7" stroke-width="0.7" stroke-dasharray="3 1.5 1 1.5" stroke-linejoin="round"/>
<path d="M385.0 312.5 L384.4 499.9" fill="none" stroke="#3f7f88" stroke-opacity="0.7" stroke-width="0.7" stroke-dasharray="3 1.5 1 1.5" stroke-linejoin="round"/>
<path d="M510.7 256.7 L419.4 312.5 L385.0 312.5" fill="none" stroke="#3f7f88" stroke-opacity="0.7" stroke-width="0.7" stroke-dasharray="3 1.5 1 1.5" stroke-linejoin="round"/>
<path d="M665.4 508.1 L665.4 245.5 L680.0 245.2 L686.0 254.0 L685.6 491.8 L754.4 527.2 L754.4 549.9 L665.4 508.1" fill="none" stroke="#bff3ec" stroke-width="3.6" stroke-linejoin="miter"/>
<path d="M665.4 508.1 L665.4 245.5 L680.0 245.2 L686.0 254.0 L685.6 491.8 L754.4 527.2 L754.4 549.9 L665.4 508.1" fill="none" stroke="#6a4a20" stroke-width="1.1" stroke-dasharray="3 1.2" stroke-linejoin="miter"/>
<path d="M665.4 508.1 L754.4 549.9" fill="none" stroke="#a87010" stroke-width="2.2" stroke-dasharray="3.5 1.8"/>
<path d="M133.5 143.0 C135.0 147.5 138.2 160.5 142.5 170.0 C146.8 179.5 155.9 190.0 159.0 200.0 C162.1 210.0 162.2 220.0 161.0 230.0 C159.8 240.0 152.6 251.7 152.0 260.0 C151.4 268.3 156.6 274.4 157.5 280.0 C158.4 285.6 160.5 288.1 157.4 293.9 C154.3 299.7 149.8 309.3 139.0 314.7 C128.2 320.1 108.0 325.5 92.6 326.3 C77.1 327.1 59.4 320.9 46.3 319.4 C33.2 317.8 20.1 316.2 13.9 317.0 C7.7 317.8 10.0 321.7 9.3 324.0 C8.7 326.3 9.9 329.8 10.0 331.0" fill="none" stroke="#eef0f8" stroke-opacity="0.8" stroke-width="2.4"/>
<path d="M133.5 143.0 C135.0 147.5 138.2 160.5 142.5 170.0 C146.8 179.5 155.9 190.0 159.0 200.0 C162.1 210.0 162.2 220.0 161.0 230.0 C159.8 240.0 152.6 251.7 152.0 260.0 C151.4 268.3 156.6 274.4 157.5 280.0 C158.4 285.6 160.5 288.1 157.4 293.9 C154.3 299.7 149.8 309.3 139.0 314.7 C128.2 320.1 108.0 325.5 92.6 326.3 C77.1 327.1 59.4 320.9 46.3 319.4 C33.2 317.8 20.1 316.2 13.9 317.0 C7.7 317.8 10.0 321.7 9.3 324.0 C8.7 326.3 9.9 329.8 10.0 331.0" fill="none" stroke="#6a6a70" stroke-width="0.9" stroke-dasharray="4 1.5 1 1.5"/>
<path d="M5.0 342.0 C8.0 342.1 13.8 340.9 23.0 342.5 C32.2 344.1 51.5 348.4 60.0 351.8 C68.5 355.2 70.5 358.0 74.0 363.0 C77.5 368.0 80.6 374.1 81.0 381.9 C81.4 389.7 79.9 401.9 76.4 409.6 C72.9 417.3 64.2 421.8 60.0 428.0 C55.8 434.2 53.3 440.5 51.0 446.7 C48.7 452.9 50.2 457.3 46.3 465.0 C42.4 472.7 34.6 484.1 27.8 493.0 C21.0 501.9 9.2 514.2 5.5 518.4" fill="none" stroke="#eef0f8" stroke-opacity="0.8" stroke-width="2.4"/>
<path d="M5.0 342.0 C8.0 342.1 13.8 340.9 23.0 342.5 C32.2 344.1 51.5 348.4 60.0 351.8 C68.5 355.2 70.5 358.0 74.0 363.0 C77.5 368.0 80.6 374.1 81.0 381.9 C81.4 389.7 79.9 401.9 76.4 409.6 C72.9 417.3 64.2 421.8 60.0 428.0 C55.8 434.2 53.3 440.5 51.0 446.7 C48.7 452.9 50.2 457.3 46.3 465.0 C42.4 472.7 34.6 484.1 27.8 493.0 C21.0 501.9 9.2 514.2 5.5 518.4" fill="none" stroke="#6a6a70" stroke-width="0.9" stroke-dasharray="4 1.5 1 1.5"/>
<path d="M525.0 215.0 C532.5 215.3 550.5 216.2 570.0 216.6 C589.5 217.0 623.7 218.3 642.0 217.5 C660.3 216.7 667.0 214.9 680.0 212.0 C693.0 209.1 704.3 206.0 720.0 200.0 C735.7 194.0 759.8 184.3 774.0 176.0 C788.2 167.7 798.0 155.5 805.0 150.0 C812.0 144.5 814.2 144.2 816.0 143.0" fill="none" stroke="#d8b070" stroke-width="1.6"/>
<path d="M525.0 215.0 C532.5 215.3 550.5 216.2 570.0 216.6 C589.5 217.0 623.7 218.3 642.0 217.5 C660.3 216.7 667.0 214.9 680.0 212.0 C693.0 209.1 704.3 206.0 720.0 200.0 C735.7 194.0 759.8 184.3 774.0 176.0 C788.2 167.7 798.0 155.5 805.0 150.0 C812.0 144.5 814.2 144.2 816.0 143.0" fill="none" stroke="#2a2010" stroke-width="0.9" stroke-dasharray="2.5 2"/>
<path d="M219.5 562.0 C219.6 561.6 219.3 564.9 220.3 559.7 C221.3 554.5 223.4 540.7 225.4 530.7 C227.4 520.7 229.1 509.6 232.2 499.9 C235.3 490.2 239.9 481.2 244.2 472.6 C248.5 464.1 252.8 456.0 257.9 448.6 C263.0 441.2 268.2 434.7 275.0 428.1 C281.8 421.6 290.4 414.7 298.9 409.3 C307.4 403.9 317.1 399.0 326.2 395.6 C335.3 392.2 343.9 390.7 353.6 388.8 C363.3 386.9 375.0 385.5 384.4 384.4 C393.8 383.3 400.7 382.8 410.0 382.0 C419.3 381.2 429.2 380.8 440.0 379.6 C450.8 378.4 465.0 376.8 475.0 375.0 C485.0 373.2 491.2 371.2 500.0 369.0 C508.8 366.8 519.3 363.9 528.0 362.0 C536.7 360.1 545.0 358.9 552.0 357.6 C559.0 356.3 562.0 355.6 570.0 354.0 C578.0 352.4 590.0 350.2 600.0 348.0 C610.0 345.8 620.0 343.1 630.0 341.0 C640.0 338.9 651.0 336.4 660.0 335.6 C669.0 334.8 677.3 335.3 684.0 336.0 C690.7 336.7 694.0 338.3 700.0 340.0 C706.0 341.7 713.3 343.2 720.0 346.0 C726.7 348.8 733.3 353.3 740.0 357.0 C746.7 360.7 753.3 364.2 760.0 368.0 C766.7 371.8 773.3 376.6 780.0 380.0 C786.7 383.4 793.3 386.9 800.0 388.5 C806.7 390.1 811.7 389.5 820.0 389.4 C828.3 389.3 838.2 387.7 849.8 387.8 C861.4 387.9 878.0 390.0 889.6 390.0 C901.2 390.0 909.5 388.7 919.5 387.8 C929.5 386.9 941.1 385.5 949.4 384.8 C957.7 384.1 961.0 383.6 969.3 383.4 C977.6 383.2 994.0 383.4 999.0 383.4" fill="none" stroke="#ee2626" stroke-width="2"/>
<path d="M219.5 562.0 C219.6 561.6 219.3 564.9 220.3 559.7 C221.3 554.5 223.4 540.7 225.4 530.7 C227.4 520.7 229.1 509.6 232.2 499.9 C235.3 490.2 239.9 481.2 244.2 472.6 C248.5 464.1 252.8 456.0 257.9 448.6 C263.0 441.2 268.2 434.7 275.0 428.1 C281.8 421.6 290.4 414.7 298.9 409.3 C307.4 403.9 317.1 399.0 326.2 395.6 C335.3 392.2 343.9 390.7 353.6 388.8 C363.3 386.9 375.0 385.5 384.4 384.4 C393.8 383.3 400.7 382.8 410.0 382.0 C419.3 381.2 429.2 380.8 440.0 379.6 C450.8 378.4 465.0 376.8 475.0 375.0 C485.0 373.2 491.2 371.2 500.0 369.0 C508.8 366.8 519.3 363.9 528.0 362.0 C536.7 360.1 545.0 358.9 552.0 357.6 C559.0 356.3 562.0 355.6 570.0 354.0 C578.0 352.4 590.0 350.2 600.0 348.0 C610.0 345.8 620.0 343.1 630.0 341.0 C640.0 338.9 651.0 336.4 660.0 335.6 C669.0 334.8 677.3 335.3 684.0 336.0 C690.7 336.7 694.0 338.3 700.0 340.0 C706.0 341.7 713.3 343.2 720.0 346.0 C726.7 348.8 733.3 353.3 740.0 357.0 C746.7 360.7 753.3 364.2 760.0 368.0 C766.7 371.8 773.3 376.6 780.0 380.0 C786.7 383.4 793.3 386.9 800.0 388.5 C806.7 390.1 811.7 389.5 820.0 389.4 C828.3 389.3 838.2 387.7 849.8 387.8 C861.4 387.9 878.0 390.0 889.6 390.0 C901.2 390.0 909.5 388.7 919.5 387.8 C929.5 386.9 941.1 385.5 949.4 384.8 C957.7 384.1 961.0 383.6 969.3 383.4 C977.6 383.2 994.0 383.4 999.0 383.4" fill="none" stroke="#2a1515" stroke-opacity="0.55" stroke-width="1.6" stroke-dasharray="1.4 3.6"/>
<path d="M219.5 562.0 C219.6 561.6 219.3 564.9 220.3 559.7 C221.3 554.5 223.4 540.7 225.4 530.7 C227.4 520.7 229.1 509.6 232.2 499.9 C235.3 490.2 239.9 481.2 244.2 472.6 C248.5 464.1 252.8 456.0 257.9 448.6 C263.0 441.2 268.2 434.7 275.0 428.1 C281.8 421.6 290.4 414.7 298.9 409.3 C307.4 403.9 317.1 399.0 326.2 395.6 C335.3 392.2 343.9 390.7 353.6 388.8 C363.3 386.9 375.0 385.5 384.4 384.4 C393.8 383.3 400.7 382.8 410.0 382.0 C419.3 381.2 429.2 380.8 440.0 379.6 C450.8 378.4 465.0 376.8 475.0 375.0 C485.0 373.2 491.2 371.2 500.0 369.0 C508.8 366.8 519.3 363.9 528.0 362.0 C536.7 360.1 545.0 358.9 552.0 357.6 C559.0 356.3 562.0 355.6 570.0 354.0 C578.0 352.4 590.0 350.2 600.0 348.0 C610.0 345.8 620.0 343.1 630.0 341.0 C640.0 338.9 651.0 336.4 660.0 335.6 C669.0 334.8 677.3 335.3 684.0 336.0 C690.7 336.7 694.0 338.3 700.0 340.0 C706.0 341.7 713.3 343.2 720.0 346.0 C726.7 348.8 733.3 353.3 740.0 357.0 C746.7 360.7 753.3 364.2 760.0 368.0 C766.7 371.8 773.3 376.6 780.0 380.0 C786.7 383.4 793.3 386.9 800.0 388.5 C806.7 390.1 811.7 389.5 820.0 389.4 C828.3 389.3 838.2 387.7 849.8 387.8 C861.4 387.9 878.0 390.0 889.6 390.0 C901.2 390.0 909.5 388.7 919.5 387.8 C929.5 386.9 941.1 385.5 949.4 384.8 C957.7 384.1 961.0 383.6 969.3 383.4 C977.6 383.2 994.0 383.4 999.0 383.4" fill="none" stroke="#f0e0a0" stroke-opacity="0.6" stroke-width="1" stroke-dasharray="0.8 4.2" stroke-dashoffset="2.4"/>
</svg>
<svg class="a" style="left:0;top:-143px" width="999" height="562" viewBox="0 0 999 562" font-family="Liberation Sans"><text x="327.5" y="255" text-anchor="middle" dominant-baseline="central" paint-order="stroke" stroke-linejoin="round" font-size="8" font-weight="bold" fill="#111" stroke="#fff" stroke-width="2.2">0088</text>
<text x="316" y="447" text-anchor="middle" dominant-baseline="central" paint-order="stroke" stroke-linejoin="round" font-size="8" font-weight="bold" fill="#111" stroke="#fff" stroke-width="2.2">0957</text>
<text x="410" y="460" text-anchor="middle" dominant-baseline="central" paint-order="stroke" stroke-linejoin="round" font-size="8" font-weight="bold" fill="#111" stroke="#fff" stroke-width="2.2">1913</text>
<text x="506" y="460" text-anchor="middle" dominant-baseline="central" paint-order="stroke" stroke-linejoin="round" font-size="8" font-weight="bold" fill="#111" stroke="#fff" stroke-width="2.2">1974</text>
<text x="602" y="460" text-anchor="middle" dominant-baseline="central" paint-order="stroke" stroke-linejoin="round" font-size="8" font-weight="bold" fill="#111" stroke="#fff" stroke-width="2.2">2944</text>
<text x="763" y="406" text-anchor="middle" dominant-baseline="central" paint-order="stroke" stroke-linejoin="round" font-size="8" font-weight="bold" fill="#111" stroke="#fff" stroke-width="2.2">3844</text>
<text x="898.7" y="399.3" text-anchor="middle" dominant-baseline="central" paint-order="stroke" stroke-linejoin="round" font-size="8" font-weight="bold" fill="#111" stroke="#fff" stroke-width="2.2">4924</text>
<text x="780" y="465" text-anchor="middle" dominant-baseline="central" paint-order="stroke" stroke-linejoin="round" font-size="8.5" font-weight="bold" fill="#111" stroke="#fff" stroke-width="2.2">0.74A</text>
<text x="498.5" y="154" text-anchor="middle" dominant-baseline="central" paint-order="stroke" stroke-linejoin="round" font-size="8" font-weight="bold" fill="#e41e26" stroke="#fff" stroke-width="2.2">221</text>
<text x="354.5" y="315.5" text-anchor="middle" dominant-baseline="central" paint-order="stroke" stroke-linejoin="round" font-size="8" font-weight="bold" fill="#e41e26" stroke="#fff" stroke-width="2.2">222</text>
<text x="460" y="338" text-anchor="middle" dominant-baseline="central" paint-order="stroke" stroke-linejoin="round" font-size="8" font-weight="bold" fill="#e41e26" stroke="#fff" stroke-width="2.2">223</text>
<text x="549" y="342" text-anchor="middle" dominant-baseline="central" paint-order="stroke" stroke-linejoin="round" font-size="8" font-weight="bold" fill="#e41e26" stroke="#fff" stroke-width="2.2">224</text>
<text x="649.8" y="324.4" text-anchor="middle" dominant-baseline="central" paint-order="stroke" stroke-linejoin="round" font-size="8" font-weight="bold" fill="#e41e26" stroke="#fff" stroke-width="2.2">225</text>
<text x="707" y="425.6" text-anchor="middle" dominant-baseline="central" paint-order="stroke" stroke-linejoin="round" font-size="8" font-weight="bold" fill="#e41e26" stroke="#fff" stroke-width="2.2">226</text>
<text x="754.4" y="291.6" text-anchor="middle" dominant-baseline="central" paint-order="stroke" stroke-linejoin="round" font-size="8" font-weight="bold" fill="#e41e26" stroke="#fff" stroke-width="2.2">227</text>
<text x="825.5" y="228.8" text-anchor="middle" dominant-baseline="central" paint-order="stroke" stroke-linejoin="round" font-size="8" font-weight="bold" fill="#e41e26" stroke="#fff" stroke-width="2.2">228</text>
<text x="891.7" y="186.9" text-anchor="middle" dominant-baseline="central" paint-order="stroke" stroke-linejoin="round" font-size="8" font-weight="bold" fill="#e41e26" stroke="#fff" stroke-width="2.2">229</text>
<text x="431.5" y="163" text-anchor="middle" dominant-baseline="central" paint-order="stroke" stroke-linejoin="round" font-size="9" font-weight="bold" font-family="Liberation Serif" fill="#111" stroke="#f2ee00" stroke-width="3.6">510</text>
<text x="905.7" y="203.6" text-anchor="middle" dominant-baseline="central" paint-order="stroke" stroke-linejoin="round" font-size="9" font-weight="bold" font-family="Liberation Serif" fill="#111" stroke="#f2ee00" stroke-width="3.6">513</text>
<text x="835" y="295.4" text-anchor="middle" dominant-baseline="central" paint-order="stroke" stroke-linejoin="round" font-size="9" font-weight="bold" font-family="Liberation Serif" fill="#111" stroke="#f2ee00" stroke-width="3.6">515</text>
<text x="712.9" y="333" text-anchor="middle" dominant-baseline="central" paint-order="stroke" stroke-linejoin="round" font-size="9" font-weight="bold" font-family="Liberation Serif" fill="#111" stroke="#f2ee00" stroke-width="3.6">517</text>
<text x="736" y="471.3" text-anchor="middle" dominant-baseline="central" paint-order="stroke" stroke-linejoin="round" font-size="9" font-weight="bold" font-family="Liberation Serif" fill="#111" stroke="#f2ee00" stroke-width="3.6">519</text>
<text x="645.3" y="376" text-anchor="middle" dominant-baseline="central" paint-order="stroke" stroke-linejoin="round" font-size="9" font-weight="bold" font-family="Liberation Serif" fill="#111" stroke="#f2ee00" stroke-width="3.6">523</text>
<text x="545" y="361.4" text-anchor="middle" dominant-baseline="central" paint-order="stroke" stroke-linejoin="round" font-size="9" font-weight="bold" font-family="Liberation Serif" fill="#111" stroke="#f2ee00" stroke-width="3.6">525</text>
<text x="439" y="341" text-anchor="middle" dominant-baseline="central" paint-order="stroke" stroke-linejoin="round" font-size="9" font-weight="bold" font-family="Liberation Serif" fill="#111" stroke="#f2ee00" stroke-width="3.6">527</text>
<text x="322" y="368" text-anchor="middle" dominant-baseline="central" paint-order="stroke" stroke-linejoin="round" font-size="9" font-weight="bold" font-family="Liberation Serif" fill="#111" stroke="#f2ee00" stroke-width="3.6">529</text>
<text x="423.8" y="146" text-anchor="middle" dominant-baseline="central" paint-order="stroke" stroke-linejoin="round" font-size="8" fill="#4e4e4e" stroke="#f4f4f4" stroke-width="1.8" stroke-opacity="0.9">126</text>
<text x="317.5" y="217.5" text-anchor="middle" dominant-baseline="central" paint-order="stroke" stroke-linejoin="round" font-size="8" fill="#4e4e4e" stroke="#f4f4f4" stroke-width="1.8" stroke-opacity="0.9" transform="rotate(-68 317.5 217.5)">128</text>
<text x="396.6" y="237.8" text-anchor="middle" dominant-baseline="central" paint-order="stroke" stroke-linejoin="round" font-size="8" fill="#4e4e4e" stroke="#f4f4f4" stroke-width="1.8" stroke-opacity="0.9" transform="rotate(-22 396.6 237.8)">184</text>
<text x="499.5" y="173.5" text-anchor="middle" dominant-baseline="central" paint-order="stroke" stroke-linejoin="round" font-size="8" fill="#4e4e4e" stroke="#f4f4f4" stroke-width="1.8" stroke-opacity="0.9" transform="rotate(-90 499.5 173.5)">50</text>
<text x="500" y="229.5" text-anchor="middle" dominant-baseline="central" paint-order="stroke" stroke-linejoin="round" font-size="8" fill="#4e4e4e" stroke="#f4f4f4" stroke-width="1.8" stroke-opacity="0.9" transform="rotate(-90 500 229.5)">38</text>
<text x="464" y="271.6" text-anchor="middle" dominant-baseline="central" paint-order="stroke" stroke-linejoin="round" font-size="8" fill="#4e4e4e" stroke="#f4f4f4" stroke-width="1.8" stroke-opacity="0.9" transform="rotate(-32 464 271.6)">78</text>
<text x="497.5" y="269.5" text-anchor="middle" dominant-baseline="central" paint-order="stroke" stroke-linejoin="round" font-size="8" fill="#4e4e4e" stroke="#f4f4f4" stroke-width="1.8" stroke-opacity="0.9" transform="rotate(-90 497.5 269.5)">22</text>
<text x="481" y="294.5" text-anchor="middle" dominant-baseline="central" paint-order="stroke" stroke-linejoin="round" font-size="8" fill="#4e4e4e" stroke="#f4f4f4" stroke-width="1.8" stroke-opacity="0.9" transform="rotate(-32 481 294.5)">29</text>
<text x="400.8" y="308.7" text-anchor="middle" dominant-baseline="central" paint-order="stroke" stroke-linejoin="round" font-size="8" fill="#4e4e4e" stroke="#f4f4f4" stroke-width="1.8" stroke-opacity="0.9">23</text>
<text x="260" y="357" text-anchor="middle" dominant-baseline="central" paint-order="stroke" stroke-linejoin="round" font-size="8" fill="#4e4e4e" stroke="#f4f4f4" stroke-width="1.8" stroke-opacity="0.9" transform="rotate(-82 260 357)">124</text>
<text x="372" y="405" text-anchor="middle" dominant-baseline="central" paint-order="stroke" stroke-linejoin="round" font-size="8" fill="#4e4e4e" stroke="#f4f4f4" stroke-width="1.8" stroke-opacity="0.9" transform="rotate(-90 372 405)">133</text>
<text x="464.5" y="406" text-anchor="middle" dominant-baseline="central" paint-order="stroke" stroke-linejoin="round" font-size="8" fill="#4e4e4e" stroke="#f4f4f4" stroke-width="1.8" stroke-opacity="0.9" transform="rotate(-90 464.5 406)">139</text>
<text x="257" y="476" text-anchor="middle" dominant-baseline="central" paint-order="stroke" stroke-linejoin="round" font-size="8" fill="#4e4e4e" stroke="#f4f4f4" stroke-width="1.8" stroke-opacity="0.9" transform="rotate(32 257 476)">30</text>
<text x="341" y="483" text-anchor="middle" dominant-baseline="central" paint-order="stroke" stroke-linejoin="round" font-size="8" fill="#4e4e4e" stroke="#f4f4f4" stroke-width="1.8" stroke-opacity="0.9" transform="rotate(-10 341 483)">77</text>
<text x="430" y="492" text-anchor="middle" dominant-baseline="central" paint-order="stroke" stroke-linejoin="round" font-size="8" fill="#4e4e4e" stroke="#f4f4f4" stroke-width="1.8" stroke-opacity="0.9">83</text>
<text x="531" y="298" text-anchor="middle" dominant-baseline="central" paint-order="stroke" stroke-linejoin="round" font-size="8" fill="#4e4e4e" stroke="#f4f4f4" stroke-width="1.8" stroke-opacity="0.9">50</text>
<text x="565" y="295" text-anchor="middle" dominant-baseline="central" paint-order="stroke" stroke-linejoin="round" font-size="8" fill="#4e4e4e" stroke="#f4f4f4" stroke-width="1.8" stroke-opacity="0.9" transform="rotate(-60 565 295)">17</text>
<text x="606" y="298" text-anchor="middle" dominant-baseline="central" paint-order="stroke" stroke-linejoin="round" font-size="8" fill="#4e4e4e" stroke="#f4f4f4" stroke-width="1.8" stroke-opacity="0.9">60</text>
<text x="556" y="406" text-anchor="middle" dominant-baseline="central" paint-order="stroke" stroke-linejoin="round" font-size="8" fill="#4e4e4e" stroke="#f4f4f4" stroke-width="1.8" stroke-opacity="0.9" transform="rotate(-90 556 406)">140</text>
<text x="653.7" y="412" text-anchor="middle" dominant-baseline="central" paint-order="stroke" stroke-linejoin="round" font-size="8" fill="#4e4e4e" stroke="#f4f4f4" stroke-width="1.8" stroke-opacity="0.9" transform="rotate(-90 653.7 412)">162</text>
<text x="695" y="382" text-anchor="middle" dominant-baseline="central" paint-order="stroke" stroke-linejoin="round" font-size="8" fill="#4e4e4e" stroke="#f4f4f4" stroke-width="1.8" stroke-opacity="0.9" transform="rotate(-90 695 382)">169</text>
<text x="520" y="494" text-anchor="middle" dominant-baseline="central" paint-order="stroke" stroke-linejoin="round" font-size="8" fill="#4e4e4e" stroke="#f4f4f4" stroke-width="1.8" stroke-opacity="0.9" transform="rotate(3 520 494)">70</text>
<text x="613" y="500" text-anchor="middle" dominant-baseline="central" paint-order="stroke" stroke-linejoin="round" font-size="8" fill="#4e4e4e" stroke="#f4f4f4" stroke-width="1.8" stroke-opacity="0.9" transform="rotate(8 613 500)">77</text>
<text x="728" y="497" text-anchor="middle" dominant-baseline="central" paint-order="stroke" stroke-linejoin="round" font-size="8" fill="#4e4e4e" stroke="#f4f4f4" stroke-width="1.8" stroke-opacity="0.9" transform="rotate(22 728 497)">55</text>
<text x="670" y="550" text-anchor="middle" dominant-baseline="central" paint-order="stroke" stroke-linejoin="round" font-size="8" fill="#4e4e4e" stroke="#f4f4f4" stroke-width="1.8" stroke-opacity="0.9" transform="rotate(90 670 550)">70</text>
<text x="676" y="254" text-anchor="middle" dominant-baseline="central" paint-order="stroke" stroke-linejoin="round" font-size="8" fill="#4e4e4e" stroke="#f4f4f4" stroke-width="1.8" stroke-opacity="0.9">10</text>
<text x="716" y="250" text-anchor="middle" dominant-baseline="central" paint-order="stroke" stroke-linejoin="round" font-size="8" fill="#4e4e4e" stroke="#f4f4f4" stroke-width="1.8" stroke-opacity="0.9">33</text>
<text x="656" y="268" text-anchor="middle" dominant-baseline="central" paint-order="stroke" stroke-linejoin="round" font-size="8" fill="#4e4e4e" stroke="#f4f4f4" stroke-width="1.8" stroke-opacity="0.9" transform="rotate(-90 656 268)">(30)</text>
<text x="690" y="253" text-anchor="middle" dominant-baseline="central" paint-order="stroke" stroke-linejoin="round" font-size="8" fill="#4e4e4e" stroke="#f4f4f4" stroke-width="1.8" stroke-opacity="0.9" transform="rotate(-50 690 253)">9</text>
<text x="781" y="224" text-anchor="middle" dominant-baseline="central" paint-order="stroke" stroke-linejoin="round" font-size="8" fill="#4e4e4e" stroke="#f4f4f4" stroke-width="1.8" stroke-opacity="0.9" transform="rotate(-32 781 224)">76</text>
<text x="823" y="354.6" text-anchor="middle" dominant-baseline="central" paint-order="stroke" stroke-linejoin="round" font-size="8" fill="#4e4e4e" stroke="#f4f4f4" stroke-width="1.8" stroke-opacity="0.9" transform="rotate(52 823 354.6)">164</text>
<text x="887.5" y="274.8" text-anchor="middle" dominant-baseline="central" paint-order="stroke" stroke-linejoin="round" font-size="8" fill="#4e4e4e" stroke="#f4f4f4" stroke-width="1.8" stroke-opacity="0.9" transform="rotate(52 887.5 274.8)">158</text>
<text x="949.8" y="211.4" text-anchor="middle" dominant-baseline="central" paint-order="stroke" stroke-linejoin="round" font-size="8" fill="#4e4e4e" stroke="#f4f4f4" stroke-width="1.8" stroke-opacity="0.9" transform="rotate(50 949.8 211.4)">151</text>
<text x="870" y="495" text-anchor="middle" dominant-baseline="central" paint-order="stroke" stroke-linejoin="round" font-size="8" fill="#4e4e4e" stroke="#f4f4f4" stroke-width="1.8" stroke-opacity="0.9" transform="rotate(90 870 495)">179</text>
<text x="955" y="456" text-anchor="middle" dominant-baseline="central" paint-order="stroke" stroke-linejoin="round" font-size="8" fill="#4e4e4e" stroke="#f4f4f4" stroke-width="1.8" stroke-opacity="0.9" transform="rotate(90 955 456)">178</text>
<text x="992" y="499.5" text-anchor="middle" dominant-baseline="central" paint-order="stroke" stroke-linejoin="round" font-size="8" fill="#4e4e4e" stroke="#f4f4f4" stroke-width="1.8" stroke-opacity="0.9" transform="rotate(-62 992 499.5)">150</text>
<text x="953" y="147" text-anchor="middle" dominant-baseline="central" paint-order="stroke" stroke-linejoin="round" font-size="8" fill="#4e4e4e" stroke="#f4f4f4" stroke-width="1.8" stroke-opacity="0.9" transform="rotate(50 953 147)">81</text>
<text x="851" y="178" text-anchor="middle" dominant-baseline="central" paint-order="stroke" stroke-linejoin="round" font-size="8" fill="#4e4e4e" stroke="#f4f4f4" stroke-width="1.8" stroke-opacity="0.9" transform="rotate(-50 851 178)">86</text>
<text x="659" y="197.5" text-anchor="middle" dominant-baseline="central" paint-order="stroke" stroke-linejoin="round" font-size="12" font-weight="bold" fill="#1d55b8" stroke="#fdf96a" stroke-width="4">AE 7'</text>
<text x="179.5" y="287.5" text-anchor="middle" dominant-baseline="central" paint-order="stroke" stroke-linejoin="round" font-size="12" font-weight="bold" fill="#1d55b8" stroke="#fdf96a" stroke-width="4">AE 8'</text>
<text x="668" y="502" text-anchor="middle" dominant-baseline="central" paint-order="stroke" stroke-linejoin="round" font-size="12" font-weight="bold" fill="#1d55b8" stroke="#fdf96a" stroke-width="4">AE 9'</text>
<text x="605.4" y="217" text-anchor="middle" dominant-baseline="central" paint-order="stroke" stroke-linejoin="round" font-size="8.3" font-weight="bold" letter-spacing="0.5" fill="#6b5430" stroke="#fff" stroke-width="2.2">SANDERS LANE</text></svg>
</div>
<div class="a" style="left:0;top:143px;width:5px;height:419px;background:#fff"></div>
<div class="a" style="left:0;top:143px;width:1.5px;height:419px;background:#9fd4ee"></div>
<div class="a" style="left:20px;top:158px;width:23px;height:46px;background:#fff;border:1px solid #8a8a8a;border-radius:4px"></div>
<div class="a" style="left:21px;top:179.5px;width:21px;height:1px;background:#8a8a8a"></div>
<div class="a" style="left:26px;top:167.7px;width:11px;height:1.7px;background:#444"></div>
<div class="a" style="left:30.65px;top:163px;width:1.7px;height:11px;background:#444"></div>
<div class="a" style="left:26px;top:189.8px;width:11px;height:1.8px;background:#444"></div>
<div class="a" style="left:17px;top:217px;width:46px;height:24px;background:#0b4a66;border-radius:3px"></div>
<div class="a" style="left:44px;top:217px;width:1px;height:24px;background:#4a7890"></div>
<svg class="a" style="left:24.5px;top:223px" width="12" height="12" viewBox="0 0 12 12"><rect x="3" y="0.5" width="6" height="3" fill="#fff"/><rect x="0.5" y="3.5" width="11" height="5" rx="1" fill="#fff"/><rect x="3" y="7" width="6" height="4.5" fill="#fff" stroke="#0b4a66" stroke-width="0.8"/></svg>
<svg class="a" style="left:51px;top:227px" width="7" height="4" viewBox="0 0 7 4"><path d="M0 0h7L3.5 4z" fill="#fff"/></svg>
<div class="a" style="left:5px;top:332px;width:18px;height:36px;background:#0b4a66"></div>
<svg class="a" style="left:10px;top:346px" width="5" height="8" viewBox="0 0 5 8"><path d="M0.8 0.8L4 4 0.8 7.2" fill="none" stroke="#d0dce4" stroke-width="1.1"/></svg>
<div class="a" style="left:7.4px;top:538.4px;width:94px;height:19.6px;background:#c6c6c6"></div>
<div class="a" style="left:12.4px;top:544.5px;font-size:7px;line-height:9px;color:#1a1a1a;letter-spacing:-0.05px;-webkit-text-stroke:0.15px #1a1a1a;white-space:nowrap"><b>Map Scale:</b> 1 inch = 50 feet</div>
<div class="a" style="left:35px;top:561px;width:210px;height:1px;background:#ece8dc"></div>
<div class="a" style="left:0;top:561px;width:35px;height:1px;background:#111"></div>
<div class="a" style="left:245px;top:561px;width:754px;height:1px;background:#111"></div>
<!-- basemap buttons -->
<div class="a" style="left:767px;top:151.4px;width:209.3px;height:23.3px;background:#0b4a66;border-radius:3px"></div>
<div class="a" style="left:832.5px;top:151.4px;width:1px;height:23.3px;background:#5a8298"></div>
<div class="a" style="left:882.3px;top:151.4px;width:1px;height:23.3px;background:#5a8298"></div>
<div class="a" style="left:958.2px;top:151.4px;width:1px;height:23.3px;background:#5a8298"></div>
<div class="a" style="left:776.4px;top:157.5px;font-size:10.2px;line-height:12px;color:#fff;white-space:nowrap">Road Map</div>
<div class="a" style="left:842px;top:157.5px;font-size:10.2px;line-height:12px;color:#fff;white-space:nowrap">Terrain</div>
<div class="a" style="left:890.9px;top:157.5px;font-size:10.2px;line-height:12px;color:#fff;white-space:nowrap">Photography</div>
<svg class="a" style="left:964px;top:161.5px" width="7" height="4" viewBox="0 0 7 4"><path d="M0 0h7L3.5 4z" fill="#fff"/></svg>

</body></html>
